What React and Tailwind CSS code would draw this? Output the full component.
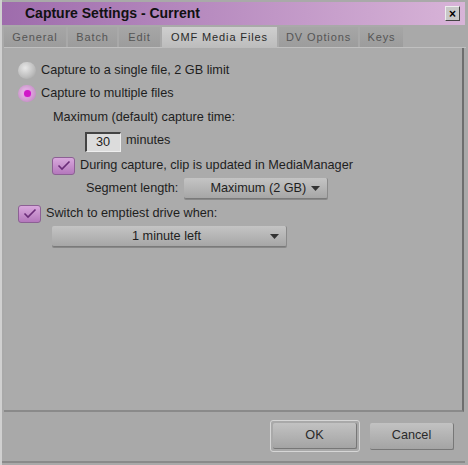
import React from "react";

const tabs = [
  { t: "General", w: "w-[62px]" },
  { t: "Batch", w: "w-[49px]" },
  { t: "Edit", w: "w-[41px]" },
  { t: "OMF Media Files", w: "w-[115px]" },
  { t: "DV Options", w: "w-[79px]" },
  { t: "Keys", w: "w-[43px]" },
];

const Radio = ({ checked }) => (
  <span
    className={
      "relative inline-flex items-center justify-center w-[18px] h-[17px] rounded-full " +
      (checked
        ? "bg-[radial-gradient(circle_at_45%_45%,#f0c8f0,#c890c8_70%,#a878a8)]"
        : "bg-[radial-gradient(circle_at_40%_35%,#e8e8e8,#bdbdbd_60%,#9a9a9a)]")
    }
  >
    {checked && <span className="w-[7px] h-[7px] rounded-full bg-[#d018c8] shadow-[0_0_2px_#f060f0]" />}
  </span>
);

const Check = () => (
  <span className="inline-flex items-center justify-center w-[23px] h-[18px] rounded-[3px] bg-[linear-gradient(#d8a8dc,#b478bc)] border border-[#8c6094]">
    <svg width="14" height="11" viewBox="0 0 14 11">
      <path d="M1.5 5.5 L5 9 L12.5 1.5" fill="none" stroke="#6a2c78" strokeWidth="1.6" />
    </svg>
  </span>
);

const Dropdown = ({ label, className, labelClass }) => (
  <div
    className={
      "flex items-center h-[21px] rounded-[2px] bg-[linear-gradient(#c4c4c4,#a6a6a6)] border-b border-b-[#7a7a7a] border-r border-r-[#8a8a8a] shadow-[0_1px_0_#888] " +
      className
    }
  >
    <span className={"text-[12.7px] text-[#1e1e1e] " + labelClass}>{label}</span>
    <svg width="9" height="5" viewBox="0 0 9 5" className="ml-auto mr-[7px]">
      <path d="M0 0 H9 L4.5 5 Z" fill="#333" />
    </svg>
  </div>
);

export default function App() {
  return (
    <div className="w-[468px] h-[465px] bg-[#a9a9a9] flex flex-col font-['Liberation_Sans',Arial,sans-serif] border-l-2 border-l-[#d0d0d0] overflow-hidden">
      {/* title bar */}
      <div className="mt-[2px] mr-[3px] h-[23px] flex items-center bg-[linear-gradient(90deg,#9e6cac,#b88cc0_45%,#d8b4d8)]">
        <span className="pl-[23px] text-[14px] font-bold text-[#111]">Capture Settings - Current</span>
        <span className="ml-auto mr-[5px] w-[15px] h-[15px] flex items-center justify-center bg-[#c8c8c8] border border-[#444] border-t-[#eee] border-l-[#eee] text-[12px] font-bold leading-none text-black">
          ×
        </span>
      </div>

      {/* tabs */}
      <div className="mt-[3px] mx-[2px] flex gap-[2px] h-[20px] items-end border-b border-b-[#c0c0c0]">
        {tabs.map(({ t, w }) => (
          <div
            key={t}
            className={
              "h-[20px] flex items-center justify-center text-[11px] tracking-[0.08em] " +
              w +
              " " +
              (t === "OMF Media Files"
                ? "bg-[linear-gradient(#cfcfcf,#bcbcbc)] text-[#2a2a2a] h-[21px] -mb-px"
                : "bg-[linear-gradient(#a6a6a6,#9c9c9c)] text-[#555]")
            }
          >
            {t}
          </div>
        ))}
      </div>

      {/* panel */}
      <div className="mx-[2px] mr-[4px] h-[364px] bg-[#ababab] border-r-2 border-r-[#6e6e6e] border-b-2 border-b-[#8a8a8a] text-[12.7px] text-[#1e1e1e]">
        <div className="flex items-center gap-[5px] pl-[14px] mt-[13px]">
          <Radio />
          <span>Capture to a single file, 2 GB limit</span>
        </div>
        <div className="flex items-center gap-[5px] pl-[14px] mt-[4px]">
          <Radio checked />
          <span>Capture to multiple files</span>
        </div>
        <div className="pl-[49px] mt-[5px]">Maximum (default) capture time:</div>
        <div className="flex items-center pl-[81px] mt-[5px]">
          <span className="w-[36px] h-[20px] flex items-center justify-end pr-[10px] bg-[#dcdcdc] border-l-2 border-t-2 border-l-[#444] border-t-[#444] border-b border-r border-b-[#eee] border-r-[#eee]">
            30
          </span>
          <span className="ml-[5px] -mt-[3px]">minutes</span>
        </div>
        <div className="flex items-center gap-[5px] pl-[48px] mt-[4px]">
          <Check />
          <span>During capture, clip is updated in MediaManager</span>
        </div>
        <div className="flex items-center pl-[82px] mt-[3px]">
          <span>Segment length:</span>
          <Dropdown label="Maximum (2 GB)" className="ml-[6px] w-[144px]" labelClass="ml-[26px]" />
        </div>
        <div className="flex items-center gap-[5px] pl-[14px] mt-[5px]">
          <Check />
          <span>Switch to emptiest drive when:</span>
        </div>
        <div className="pl-[48px] mt-[3px]">
          <Dropdown label="1 minute left" className="w-[235px]" labelClass="ml-[80px]" />
        </div>
      </div>

      {/* footer */}
      <div className="flex justify-end items-center gap-[10px] pr-[14px] mt-[8px]">
        <div className="w-[90px] h-[32px] rounded-[3px] border border-[#d6d6d6] p-[2px]">
          <div className="w-full h-full rounded-[2px] bg-[linear-gradient(#c2c2c2,#a4a4a4)] border-b border-r border-[#777] flex items-center justify-center text-[12.7px] text-[#2a2a2a]">
            OK
          </div>
        </div>
        <div className="w-[84px] h-[27px] rounded-[2px] bg-[linear-gradient(#c2c2c2,#a4a4a4)] border-b border-r border-[#777] flex items-center justify-center text-[12.7px] text-[#2a2a2a]">
          Cancel
        </div>
      </div>
      <div className="mt-auto mr-[3px] h-[4px] border-t-2 border-t-[#8a8a8a]" />
    </div>
  );
}
